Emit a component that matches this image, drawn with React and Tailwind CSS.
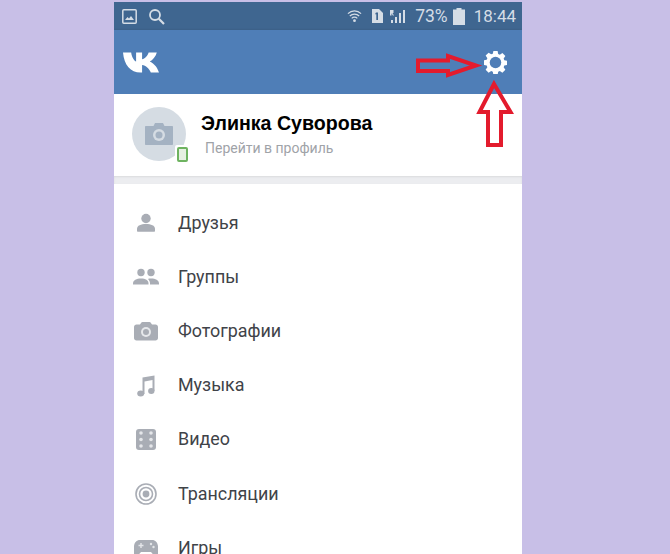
const font = { fontFamily: 'Roboto, sans-serif' };

const icons = {
  user: (
    <svg width="20" height="20" viewBox="0 0 20 20" fill="#a9adb5">
      <circle cx="10" cy="5.500" r="4.700" />
      <path d="M1 18v-2.200C1 12.600 5 11 10 11s9 1.600 9 4.800V18c0 .4-.3.700-.7.700H1.700C1.300 18.700 1 18.400 1 18z" />
    </svg>
  ),
  group: (
    <svg width="26" height="20" viewBox="0 0 26 20" fill="#a9adb5">
      <circle cx="8" cy="5.500" r="3.700" />
      <circle cx="18" cy="5.500" r="3.700" />
      <path d="M0 16.500c0-3.200 3.500-5 8-5s7.500 1.800 7.500 5v1H0z" />
      <path d="M17 17.500v-1c0-2-.8-3.500-2.200-4.500 1-.4 2.100-.5 3.200-.5 4.500 0 8 1.800 8 5v1z" />
    </svg>
  ),
  camera: (
    <svg width="24" height="20" viewBox="0 0 24 20">
      <path fill="#a9adb5" d="M8.500 1h7c.6 0 1 .2 1.300.7L18 3.500h3.500c1.400 0 2.500 1.100 2.500 2.500v11c0 1.400-1.100 2.500-2.500 2.500h-19C1.100 19.500 0 18.400 0 17V6c0-1.400 1.100-2.500 2.500-2.500H6l1.200-1.800c.3-.5.700-.7 1.300-.7z" />
      <circle cx="12" cy="11" r="5" fill="#e6e8eb" />
      <circle cx="12" cy="11" r="3" fill="#a9adb5" />
    </svg>
  ),
  music: (
    <svg width="18" height="22" viewBox="0 0 18 22" fill="#a9adb5">
      <path d="M5.500 2.500 17.500.500V16h-2V5L7.500 6.500V19h-2z" />
      <ellipse cx="3.700" cy="18.500" rx="3.500" ry="3" />
      <ellipse cx="14.300" cy="16" rx="3.200" ry="3" />
    </svg>
  ),
  video: (
    <svg width="20" height="21" viewBox="0 0 20 21">
      <rect width="20" height="21" rx="3" fill="#a9adb5" />
      {[5, 15].map((x) =>
        [4, 10.500, 17].map((y) => <circle key={`${x}-${y}`} cx={x} cy={y} r="1.800" fill="#e4e6e9" />)
      )}
    </svg>
  ),
  live: (
    <svg width="22" height="22" viewBox="0 0 22 22" fill="none" stroke="#a9adb5">
      <circle cx="11" cy="11" r="10" strokeWidth="1.600" />
      <circle cx="11" cy="11" r="6.500" strokeWidth="1.600" />
      <circle cx="11" cy="11" r="3.400" fill="#a9adb5" stroke="none" />
    </svg>
  ),
  games: (
    <svg width="24" height="20" viewBox="0 0 24 20">
      <path fill="#a9adb5" d="M6 2h12c3.500 0 5.500 2.500 6 6l.8 6.500c.2 2-1 3.500-2.800 3.500-1.300 0-2.200-.7-3-1.700L17 14H7l-2 2.300C4.200 17.300 3.300 18 2 18c-1.800 0-3-1.500-2.800-3.500L0 8c.5-3.500 2.500-6 6-6z" />
      <path fill="none" stroke="#e4e6e9" strokeWidth="1.400" d="M4.500 7.500h5M7 5v5" />
      <circle cx="17" cy="6" r="1.200" fill="#e4e6e9" />
      <circle cx="19.500" cy="9" r="1.200" fill="#e4e6e9" />
    </svg>
  ),
};

const menu = [
  { label: 'Друзья', icon: 'user' },
  { label: 'Группы', icon: 'group' },
  { label: 'Фотографии', icon: 'camera' },
  { label: 'Музыка', icon: 'music' },
  { label: 'Видео', icon: 'video' },
  { label: 'Трансляции', icon: 'live' },
  { label: 'Игры', icon: 'games' },
];

const StatusBar = () => (
  <div className="flex h-[28px] shrink-0 items-center justify-between bg-[#3f6690] pl-[8px] pr-[6px] text-[#d5dde6]">
    <div className="flex items-center gap-[11px]">
      <svg width="15" height="15" viewBox="0 0 15 15">
        <rect x="0.800" y="0.800" width="13.400" height="13.400" rx="1" fill="none" stroke="#d5dde6" strokeWidth="1.500" />
        <path fill="#d5dde6" d="M3 11l2.500-3 1.500 1.500L9 7l3 4z" />
      </svg>
      <svg width="17" height="17" viewBox="0 0 17 17" fill="none" stroke="#d5dde6">
        <circle cx="7" cy="7" r="5" strokeWidth="1.800" />
        <path d="M10.800 10.800 16 16" strokeWidth="2.200" />
      </svg>
    </div>
    <div className="flex items-center" style={font}>
      <svg width="15" height="16" viewBox="0 0 16 16" fill="none" stroke="#d5dde6" strokeWidth="1.300" className="mr-[9px]">
        <path d="M1 5.500c4-4 10-4 14 0M3 8c2.800-2.800 7.200-2.800 10 0M5 10.500c1.600-1.600 4.400-1.600 6 0" />
        <circle cx="8" cy="13" r="1.500" fill="#d5dde6" stroke="none" />
      </svg>
      <svg width="12" height="14" viewBox="0 0 12 14" className="mr-[7px]">
        <path fill="#d5dde6" d="M1 0h7l4 4v10H1z" />
        <path fill="#3f6690" d="M5 3.500h2v7.500H5.300V5.300H4z" />
      </svg>
      <svg width="16" height="15" viewBox="0 0 16 15" fill="#d5dde6" className="mr-[9px]">
        <path d="M1 11h2v3H1zM5 8h2v6H5zM9 4h2v10H9zM13 1h2v13h-2z" />
        <path d="M0 1h3.500v3H2.500L4 6.500H2.800L1.500 4.200V6.500H0z" />
      </svg>
      <span className="mr-[5px] mt-[1px] text-[17.500px] leading-none">73%</span>
      <svg width="12" height="17" viewBox="0 0 12 17" className="mr-[9px]">
        <path fill="#d5dde6" d="M3.500 0h5v1.500H12V17H0V1.500h3.500z" />
      </svg>
      <span className="mt-[1px] text-[17px] leading-none">18:44</span>
    </div>
  </div>
);

const Header = () => (
  <div className="flex h-[64px] shrink-0 items-center justify-between bg-[#4f7eb7] pl-[9px] pr-[15px] shadow-[0_1px_3px_rgba(0,0,0,0.25)]">
    <svg width="36" height="21" viewBox="0 0 33 22" preserveAspectRatio="none" fill="#fff">
      <path d="M0 .5h7.500c.6 5.500 3 9 4.500 9.500V.5h5.500v7c2.500-.2 5-3.500 6-7H31c-1 4.500-4 8-6.500 9.500 2.500 1.200 6.500 4.500 8.500 11.500h-7.500c-1.500-4.500-4.500-7.500-8-8v8H16C7 21.500 1 14 0 .5z" />
    </svg>
    <svg width="23" height="23" viewBox="0 0 24 24">
      <path fill="#fff" d="M9.800 0h4.400l.6 3.200 1.700.7 2.700-1.800 3.100 3.100-1.800 2.700.7 1.700 3 .6v4.400l-3 .6-.7 1.700 1.800 2.700-3.100 3.100-2.700-1.800-1.700.7-.6 3.300H9.800l-.6-3.300-1.700-.7-2.700 1.800-3.100-3.100 1.800-2.700-.7-1.700-3-.6V9.800l3-.6.7-1.700-1.800-2.700 3.100-3.100 2.700 1.800 1.700-.7z" />
      <circle cx="12" cy="12" r="6" fill="#4f7eb7" />
    </svg>
  </div>
);

const Profile = () => (
  <div className="flex h-[82px] shrink-0 items-start bg-white pl-[18px] pt-[13px]">
    <div className="relative flex h-[54px] w-[54px] items-center justify-center rounded-full bg-[#d5dce3]">
      <svg width="28" height="22" viewBox="0 0 28 22">
        <path fill="#a4b2c2" d="M10 0h8l1.500 3H27c.6 0 1 .4 1 1v17c0 .6-.4 1-1 1H1c-.6 0-1-.4-1-1V4c0-.6.4-1 1-1h7.500z" />
        <circle cx="14" cy="12" r="6" fill="#d5dce3" />
        <circle cx="14" cy="12" r="3.500" fill="#a4b2c2" />
      </svg>
      <div className="absolute bottom-[-2px] right-[-3px] flex h-[18px] w-[14px] items-center justify-center rounded-[2px] bg-white">
        <div className="h-[15px] w-[11px] rounded-[2px] border-2 border-[#6eb360] bg-[#e6f0e2]" />
      </div>
    </div>
    <div className="ml-[15px] flex flex-col">
      <span className="mt-[5px] text-[19.600px] font-bold leading-[22px] text-black" style={{ fontFamily: '"Liberation Sans", sans-serif' }}>Элинка Суворова</span>
      <span className="ml-[4px] mt-[5px] text-[14px] leading-[18px] text-[#9fa3a8]" style={font}>Перейти в профиль</span>
    </div>
  </div>
);

const MenuRow = ({ label, icon }) => (
  <div className="flex h-[54.200px] shrink-0 items-center">
    <div className="flex w-[64px] items-center justify-center">{icons[icon]}</div>
    <span className="text-[17.900px] text-[#3f4348]" style={font}>{label}</span>
  </div>
);

const Arrows = () => (
  <svg className="absolute left-[410px] top-[46px]" width="110" height="104" viewBox="0 0 110 104" fill="none" stroke="#e31b2d" strokeWidth="4">
    <path d="M8 14.500h30V10L66 19.500 38 29v-4H8z" />
    <path d="M84 38 100.500 66H91v33H78V66H69.500z" />
  </svg>
);

export default function App() {
  return (
    <div className="relative h-[554px] w-[670px] overflow-hidden bg-[#c8bfe7] pt-[2px]">
      <div className="ml-[114px] flex h-[552px] w-[408px] flex-col overflow-hidden bg-white">
        <StatusBar />
        <Header />
        <Profile />
        <div className="h-[8px] shrink-0 bg-[#ecedf0] shadow-[inset_0_1px_2px_rgba(0,0,0,0.08)]" />
        <div className="flex flex-col pt-[12px]">
          {menu.map((item) => (
            <MenuRow key={item.label} {...item} />
          ))}
        </div>
      </div>
      <Arrows />
    </div>
  );
}
